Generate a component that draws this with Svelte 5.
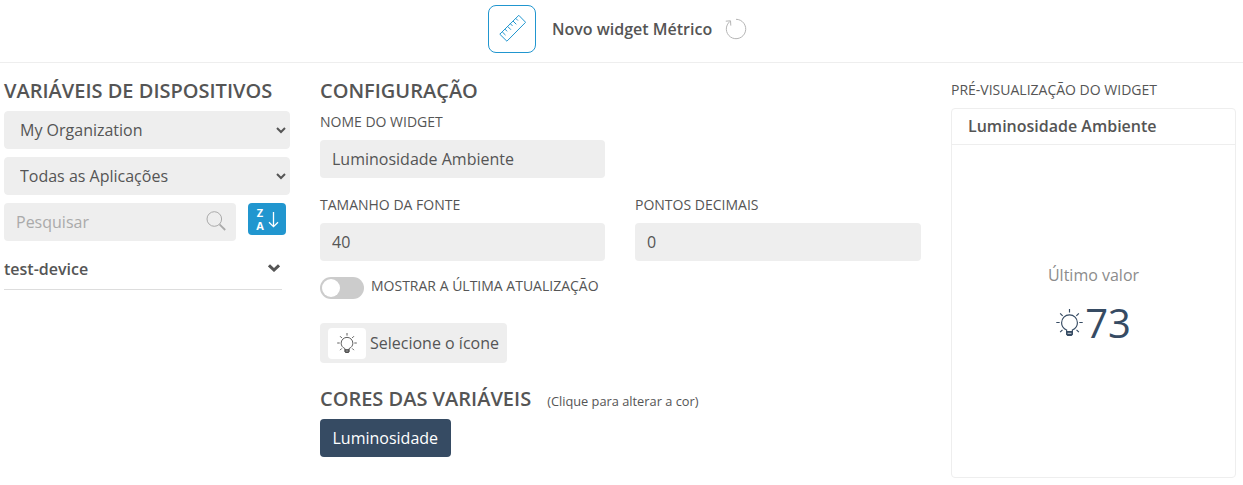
<script>
  let organization = $state('org');
  let application = $state('all');
  let search = $state('');
  let widgetName = $state('Luminosidade Ambiente');
  let fontSize = $state('40');
  let decimals = $state('0');
  let showLastUpdate = $state(false);
  let expanded = $state(false);

  const value = 73;
  const variables = [{ name: 'Luminosidade', color: '#364b63' }];
  const preview = $derived(value.toFixed(Number(decimals) || 0));
</script>

{#snippet bulb(size)}
  <svg class="bulb" width={size} height={size} viewBox="0 0 28 28">
    <path d="M11 23.500v-1.800c-3-1.200-5.200-4-5.200-7.400a8.200 8.200 0 0 1 16.400 0c0 3.400-2.200 6.200-5.200 7.400v1.800" />
    <path d="M14 0v3.700M4.300 4.500l2.600 2.600M23.700 4.500l-2.600 2.600M.3 14h3.500M24.200 14h3.500M4.300 24l2.400-2.400M23.700 24l-2.400-2.400" />
    <path class="base" d="M11 23.300h6v3l-1.200 1.200h-3.600l-1.200-1.200z" />
    <path class="thread" d="M12 25.200h4" />
  </svg>
{/snippet}

<header class="header">
  <div class="widget-type">
    <svg width="28" height="28" viewBox="0 0 28 28">
      <path d="M1.800 19.200L20.800.3l6.800 7L8.900 26.200z" />
      <path d="M4.200 16.800l3.300 3.300M6.900 14.100l2.200 2.200M9.600 11.400l3.300 3.300M12.300 8.700l2.200 2.200M15 6l3.300 3.300M17.700 3.300l2.200 2.200" />
    </svg>
  </div>
  <span class="header-title">Novo widget Métrico</span>
  <button class="reload" aria-label="Recarregar">
    <svg width="22" height="22" viewBox="0 0 22 22">
      <path d="M5 3.400A9.700 9.700 0 1 0 11 1.300M.8 3.200l4.700-.4.300 4.800" />
    </svg>
  </button>
</header>

<main class="content">
  <section class="devices">
    <h2>VARIÁVEIS DE DISPOSITIVOS</h2>
    <select class="field" bind:value={organization} aria-label="Organização">
      <option value="org">My Organization</option>
    </select>
    <select class="field" bind:value={application} aria-label="Aplicação">
      <option value="all">Todas as Aplicações</option>
    </select>
    <div class="search-row">
      <div class="field search">
        <input placeholder="Pesquisar" bind:value={search} />
        <svg width="20" height="20" viewBox="0 0 20 20">
          <circle cx="8.300" cy="8" r="7.300" />
          <path class="handle" d="M13.500 13.300l5.700 5.700" />
        </svg>
      </div>
      <button class="sort" aria-label="Ordenar">
        <span class="letters"><b>Z</b><b>A</b></span>
        <svg width="11" height="16" viewBox="0 0 11 16">
          <path d="M5.500 0v14.500M1 10.300l4.500 4.400L10 10.300" />
        </svg>
      </button>
    </div>
    <button class="device" onclick={() => (expanded = !expanded)}>
      <span>test-device</span>
      <svg width="12" height="8" viewBox="0 0 12 8">
        <path d="M1 1.300l5 4.700 5-4.700" />
      </svg>
    </button>
  </section>

  <section class="config">
    <h2>CONFIGURAÇÃO</h2>
    <div class="grid">
      <label class="control">
        <span class="label">NOME DO WIDGET</span>
        <input class="field" bind:value={widgetName} />
      </label>
      <label class="control row-start">
        <span class="label">TAMANHO DA FONTE</span>
        <input class="field" bind:value={fontSize} />
      </label>
      <label class="control">
        <span class="label">PONTOS DECIMAIS</span>
        <input class="field" bind:value={decimals} />
      </label>
    </div>
    <label class="toggle">
      <input type="checkbox" bind:checked={showLastUpdate} />
      <span class="label">MOSTRAR A ÚLTIMA ATUALIZAÇÃO</span>
    </label>
    <button class="icon-picker">
      <span class="icon-box">{@render bulb(20)}</span>
      <span>Selecione o ícone</span>
    </button>
    <div class="colors-title">
      <h2>CORES DAS VARIÁVEIS</h2>
      <small>(Clique para alterar a cor)</small>
    </div>
    {#each variables as variable}
      <button class="variable" style="background: {variable.color}">{variable.name}</button>
    {/each}
  </section>

  <section class="preview">
    <span class="label">PRÉ-VISUALIZAÇÃO DO WIDGET</span>
    <div class="card">
      <div class="card-title">{widgetName}</div>
      <div class="card-body">
        <span class="caption">Último valor</span>
        <div class="metric" style="font-size: {fontSize}px">
          {@render bulb(27)}
          <span>{preview}</span>
        </div>
      </div>
    </div>
  </section>
</main>

<style>
  :global(body) {
    background: #fff;
    color: #555;
    font: 16px/24px 'Open Sans', sans-serif;
    overflow: hidden;
  }

  * {
    box-sizing: border-box;
  }

  svg {
    display: block;
    flex: none;
    fill: none;
    stroke: currentColor;
  }

  button,
  input,
  select {
    margin: 0;
    padding: 0;
    border: 0;
    background: none;
    color: inherit;
    font: inherit;
    outline: none;
  }

  button {
    cursor: pointer;
  }

  h2 {
    margin: 0;
    font-size: 20px;
    line-height: 24px;
    font-weight: 600;
  }

  /* Header */
  .header {
    display: flex;
    align-items: center;
    height: 63px;
    padding: 0 0 5px 488px;
    border-bottom: 1px solid #eee;
  }

  .widget-type {
    display: flex;
    align-items: center;
    justify-content: center;
    width: 48px;
    height: 48px;
    border: 1px solid #2196cf;
    border-radius: 8px;
    color: #2196cf;
  }

  .header-title {
    margin: 0 13px 0 16px;
    font-weight: 600;
  }

  .reload {
    color: #b5b5b5;
  }

  /* Columns */
  .content {
    display: grid;
    grid-template-columns: 286px 601px 285px;
    column-gap: 30px;
    padding: 16px 0 0 4px;
  }

  .field {
    display: block;
    width: 100%;
    height: 38px;
    padding: 0 12px;
    border-radius: 4px;
    background: #eee;
  }

  .label {
    font-size: 14px;
    line-height: 20px;
  }

  /* Devices */
  .devices h2 {
    margin-bottom: 8px;
  }

  select.field {
    margin-bottom: 8px;
    padding: 0 0 0 11px;
    border: 1px solid #eee;
  }

  .search-row {
    display: flex;
    gap: 12px;
  }

  .search {
    display: flex;
    align-items: center;
    width: 232px;
    padding-right: 10px;
    color: #aaa;
  }

  .search svg {
    margin-top: -2px;
  }

  .search input {
    flex: 1;
    min-width: 0;
  }

  .search input::placeholder {
    color: #aaa;
  }

  .handle {
    stroke-width: 1.8;
  }

  .sort {
    display: flex;
    align-items: center;
    justify-content: center;
    gap: 4px;
    width: 38px;
    height: 32px;
    padding: 1px 0 0 1px;
    border-radius: 4px;
    background: #2196cf;
    color: #fff;
  }

  .sort svg {
    stroke-width: 1.3;
  }

  .letters {
    display: flex;
    flex-direction: column;
    font-size: 11px;
    line-height: 12.5px;
  }

  .device {
    display: flex;
    align-items: center;
    justify-content: space-between;
    width: 278px;
    height: 49px;
    padding: 8px 2px 0 0;
    border-bottom: 1px solid #ddd;
    font-weight: 600;
  }

  .device svg {
    margin-top: -3px;
    stroke-width: 3;
  }

  /* Configuration */
  .grid {
    display: grid;
    grid-template-columns: 285px 286px;
    gap: 17px 30px;
    margin-top: 9px;
  }

  .control {
    display: flex;
    flex-direction: column;
    gap: 8px;
  }

  .row-start {
    grid-column-start: 1;
  }

  .toggle {
    display: flex;
    gap: 7px;
    width: max-content;
    margin-top: 15px;
  }

  .toggle input {
    appearance: none;
    width: 44px;
    height: 22px;
    margin-top: 1px;
    padding: 2px;
    border-radius: 11px;
    background: #ccc;
  }

  .toggle input::before {
    content: '';
    display: block;
    width: 18px;
    height: 18px;
    border-radius: 50%;
    background: #fff;
  }

  .toggle input:checked::before {
    margin-left: 22px;
  }

  .icon-picker {
    display: flex;
    align-items: center;
    gap: 4px;
    height: 40px;
    margin-top: 24px;
    padding: 0 8px;
    border-radius: 4px;
    background: #eee;
  }

  .icon-box {
    display: flex;
    align-items: center;
    justify-content: center;
    width: 38px;
    height: 31px;
    padding-right: 1px;
    border-radius: 4px;
    background: #fff;
    color: #444;
  }

  .bulb {
    stroke-width: 1.2;
  }

  .base {
    fill: currentColor;
  }

  .thread {
    stroke: #fff;
    stroke-width: 0.8;
  }

  .colors-title {
    display: flex;
    align-items: baseline;
    gap: 16px;
    margin: 24px 0 8px;
  }

  .colors-title small {
    font-size: 12.8px;
    line-height: 20px;
  }

  .variable {
    height: 38px;
    padding: 0 12.5px;
    border-radius: 4px;
    color: #fff;
  }

  /* Preview */
  .preview {
    display: flex;
    flex-direction: column;
    padding-top: 1px;
  }

  .card {
    display: flex;
    flex-direction: column;
    height: 370px;
    margin-top: 8px;
    border: 1px solid #eee;
    border-radius: 4px;
  }

  .card-title {
    height: 36px;
    padding: 5px 16px;
    border-bottom: 1px solid #eee;
    font-weight: 600;
  }

  .card-body {
    display: flex;
    flex: 1;
    flex-direction: column;
    align-items: center;
    justify-content: center;
  }

  .caption {
    color: #8c8c8c;
  }

  .metric {
    display: flex;
    align-items: center;
    gap: 2px;
    margin-bottom: 1px;
    line-height: 71px;
    color: #364b63;
  }
</style>
